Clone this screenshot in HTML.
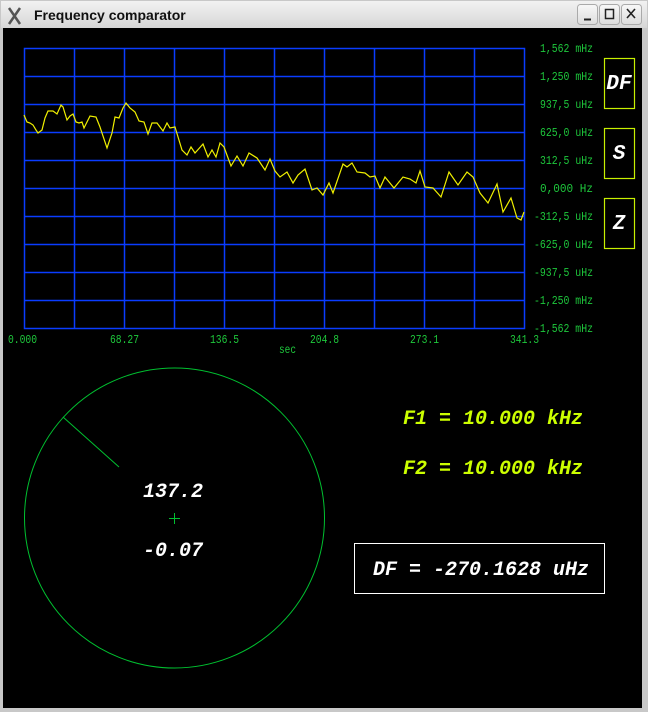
<!DOCTYPE html>
<html><head><style>
html,body{margin:0;padding:0;background:#d8d8d8;}
svg{display:block}
</style></head><body>
<svg width="648" height="712" viewBox="0 0 648 712" xmlns="http://www.w3.org/2000/svg" xml:space="preserve">
<defs>
<linearGradient id="tb" x1="0" y1="0" x2="0" y2="1"><stop offset="0" stop-color="#f2f2f2"/><stop offset="1" stop-color="#d6d6d6"/></linearGradient>
<linearGradient id="bt" x1="0" y1="0" x2="0" y2="1"><stop offset="0" stop-color="#f8f8f8"/><stop offset="1" stop-color="#dcdcdc"/></linearGradient>
</defs>
<rect x="0" y="0" width="648" height="712" fill="#c8c8c8"/>
<rect x="1" y="1" width="646" height="27" fill="url(#tb)"/>
<rect x="3" y="28" width="639" height="680" fill="#000"/>
<path d="M9 8 L20 24 M20 8 L9 24" stroke="#555" stroke-width="2.5"/>
<text x="34" y="20" font-family="Liberation Sans, sans-serif" font-weight="bold" font-size="14" fill="#111">Frequency comparator</text>
<rect x="577.5" y="4.5" width="20" height="20" rx="3" fill="url(#bt)" stroke="#aaa"/>
<rect x="599.5" y="4.5" width="20" height="20" rx="3" fill="url(#bt)" stroke="#aaa"/>
<rect x="621.5" y="4.5" width="20" height="20" rx="3" fill="url(#bt)" stroke="#aaa"/>
<path d="M584 19.5 H591" stroke="#222" stroke-width="2"/>
<rect x="605.5" y="9.5" width="8" height="9" fill="none" stroke="#222" stroke-width="1.5"/>
<path d="M627 9 L635 18 M635 9 L627 18" stroke="#222" stroke-width="1.6"/>
<g stroke="#0a3cff" stroke-width="1.5" fill="none">
<rect x="24.5" y="48.5" width="500" height="280"/>
<path d="M74.5 48V329 M124.5 48V329 M174.5 48V329 M224.5 48V329 M274.5 48V329 M324.5 48V329 M374.5 48V329 M424.5 48V329 M474.5 48V329"/>
<path d="M24 76.5H525 M24 104.5H525 M24 132.5H525 M24 160.5H525 M24 188.5H525 M24 216.5H525 M24 244.5H525 M24 272.5H525 M24 300.5H525"/>
</g>
<polyline fill="none" stroke="#f0f000" stroke-width="1.2" points="24,115 27,122 30,123 33,125 36,130 38,133 42,130 45,118 48,111 53,111 57,114 61,105 63,107 67,120 70,116 73,114 76,122 79,123 82,122 84,128 90,116 96,117 100,127 107,148 112,133 115,117 119,118 123,108 126,103 130,108 135,112 139,121 144,122 148,134 152,123 157,123 163,131 167,123 170,128 175,127 182,150 187,155 191,147 195,153 203,144 208,157 212,150 216,157 220,143 224,147 231,166 237,156 243,166 249,153 257,158 265,170 270,159 275,171 280,177 287,172 293,183 298,175 305,169 312,190 317,188 323,195 329,183 333,193 343,164 347,167 352,163 357,172 365,173 370,177 375,176 380,188 385,177 394,188 403,177 410,179 416,183 420,171 425,187 433,188 441,197 449,172 458,185 467,172 473,177 480,193 488,203 497,184 503,212 511,198 517,218 521,220 524,212"/>
<g font-family="Liberation Mono, monospace" font-size="12" fill="#1ec83c">
<text x="540" y="52" textLength="53" lengthAdjust="spacingAndGlyphs">1,562 mHz</text>
<text x="540" y="80" textLength="53" lengthAdjust="spacingAndGlyphs">1,250 mHz</text>
<text x="540" y="108" textLength="53" lengthAdjust="spacingAndGlyphs">937,5 uHz</text>
<text x="540" y="136" textLength="53" lengthAdjust="spacingAndGlyphs">625,0 uHz</text>
<text x="540" y="164" textLength="53" lengthAdjust="spacingAndGlyphs">312,5 uHz</text>
<text x="540" y="192" textLength="53" lengthAdjust="spacingAndGlyphs">0,000  Hz</text>
<text x="534" y="220" textLength="59" lengthAdjust="spacingAndGlyphs">-312,5 uHz</text>
<text x="534" y="248" textLength="59" lengthAdjust="spacingAndGlyphs">-625,0 uHz</text>
<text x="534" y="276" textLength="59" lengthAdjust="spacingAndGlyphs">-937,5 uHz</text>
<text x="534" y="304" textLength="59" lengthAdjust="spacingAndGlyphs">-1,250 mHz</text>
<text x="534" y="332" textLength="59" lengthAdjust="spacingAndGlyphs">-1,562 mHz</text>
</g>
<g font-family="Liberation Mono, monospace" font-size="12" fill="#1ec83c">
<text x="8" y="343" textLength="29" lengthAdjust="spacingAndGlyphs">0.000</text>
<text x="110" y="343" textLength="29" lengthAdjust="spacingAndGlyphs">68.27</text>
<text x="210" y="343" textLength="29" lengthAdjust="spacingAndGlyphs">136.5</text>
<text x="310" y="343" textLength="29" lengthAdjust="spacingAndGlyphs">204.8</text>
<text x="410" y="343" textLength="29" lengthAdjust="spacingAndGlyphs">273.1</text>
<text x="510" y="343" textLength="29" lengthAdjust="spacingAndGlyphs">341.3</text>
<text x="279" y="353" textLength="17" lengthAdjust="spacingAndGlyphs">sec</text>
</g>
<g fill="none" stroke="#c8f000" stroke-width="1.2">
<rect x="604.5" y="58.5" width="30" height="50"/>
<rect x="604.5" y="128.5" width="30" height="50"/>
<rect x="604.5" y="198.5" width="30" height="50"/>
</g>
<g font-family="Liberation Mono, monospace" font-size="21" font-weight="bold" font-style="italic" fill="#fff" text-anchor="middle">
<text x="619" y="89">DF</text>
<text x="619" y="159">S</text>
<text x="619" y="229">Z</text>
</g>
<circle cx="174.5" cy="518" r="150" fill="none" stroke="#00c030" stroke-width="1"/>
<path d="M63 417 L119 467" stroke="#00c030" stroke-width="1"/>
<path d="M169 518.5 H180 M174.5 513 V524" stroke="#00c030" stroke-width="1"/>
<g font-family="Liberation Mono, monospace" font-size="20" font-weight="bold" font-style="italic" fill="#fff" text-anchor="middle">
<text x="173" y="497">137.2</text>
<text x="173" y="556">-0.07</text>
</g>
<g font-family="Liberation Mono, monospace" font-size="20" font-weight="bold" font-style="italic" fill="#ccff00">
<text x="403" y="424">F1 = 10.000 kHz</text>
<text x="403" y="474">F2 = 10.000 kHz</text>
</g>
<rect x="354.5" y="543.5" width="250" height="50" fill="none" stroke="#fff" stroke-width="1"/>
<text x="373" y="575" font-family="Liberation Mono, monospace" font-size="20" font-weight="bold" font-style="italic" fill="#fff">DF = -270.1628 uHz</text>
</svg>
</body></html>
